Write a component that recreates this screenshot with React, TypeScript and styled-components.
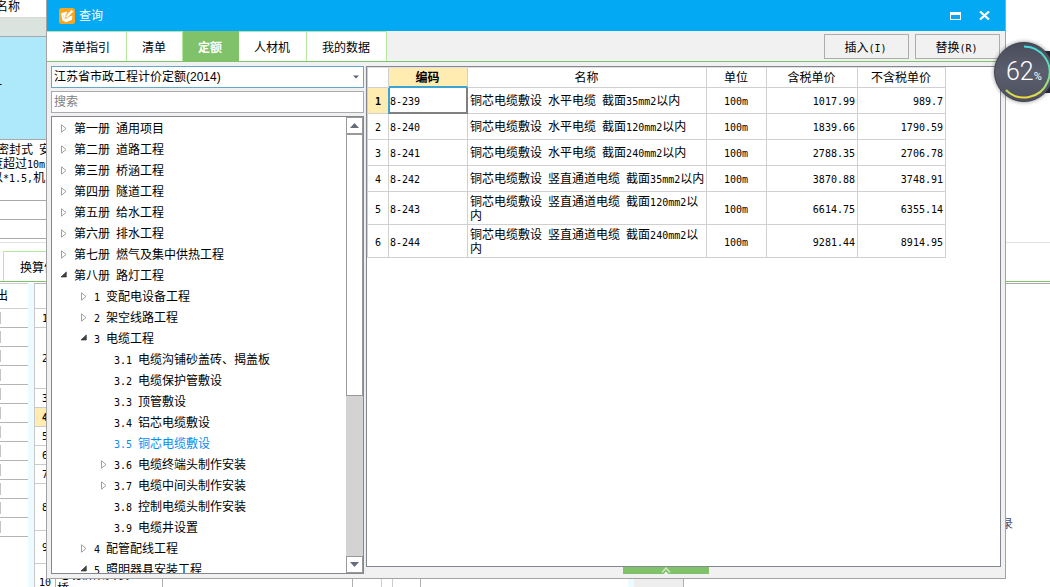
import React from 'react';
import styled, { createGlobalStyle } from 'styled-components';

const GlobalStyle = createGlobalStyle`
  *, *::before, *::after { box-sizing: border-box; }
  body {
    margin: 0;
    overflow: hidden;
    background: #fff;
    color: #000;
    font: 12px/14px "Liberation Sans", "Noto Sans CJK SC", sans-serif;
  }
  button, input, select { font: inherit; color: inherit; margin: 0; border-radius: 0; }
`;

/* ---------- text ---------- */

const Latin = styled.span`
  font-family: "DejaVu Sans Mono", "Liberation Mono", monospace;
  font-size: 10px;
  line-height: 10px;
  white-space: pre-wrap;
`;

/* Latin runs take half the width of a Chinese character. */
function Mixed({ children }: { children: string }) {
  return (
    <>
      {children.split(/([\x20-\x7e]+)/).map((part, i) =>
        i % 2 ? <Latin key={i}>{part}</Latin> : part
      )}
    </>
  );
}

/* ---------- main window behind the dialog ---------- */

const Screen = styled.div`
  position: relative;
  height: 100vh;
  overflow: hidden;
`;

const Backdrop = styled.div`
  display: flex;
  flex-direction: column;
  height: 100%;
`;

const ItemColumn = styled.div`
  width: 60px;
  flex: none;
`;

const ItemCell = styled.div<{ $h: number; $bg?: string; $line?: string; $indent?: number; $below?: number }>`
  display: flex;
  flex-direction: column;
  justify-content: center;
  height: ${p => p.$h}px;
  background: ${p => p.$bg ?? '#fff'};
  border-bottom: 1px solid ${p => p.$line ?? '#a8a8a8'};
  margin-left: ${p => -(p.$indent ?? 0)}px;
  padding-bottom: ${p => p.$below ?? 4}px;
  white-space: pre;
`;

const DetailBar = styled.div`
  display: flex;
  align-items: flex-end;
  height: 40px;
  margin-top: 3px;
  padding-left: 3px;
  border-top: 1px solid #e0e0e0;
  border-bottom: 1px solid #80c269;
`;

const DetailTab = styled.button`
  height: 30px;
  padding: 3px 16px 0;
  background: #fff;
  border: 1px solid #b4e89a;
  border-bottom: 0;
`;

const DetailArea = styled.div`
  display: flex;
  flex: 1;
  min-height: 0;
  margin-top: 1px;
`;

const SideGrid = styled.table`
  width: 28px;
  flex: none;
  align-self: flex-start;
  table-layout: fixed;
  border-collapse: separate;
  border-spacing: 0;
  border-top: 1px solid #d0d0d0;
  th, td { padding: 0; height: 19px; border-bottom: 1px solid #b4b4b4; text-align: left; }
  th { height: 25px; font-weight: 400; text-indent: -4px; border-color: #d0d0d0; }
`;

const TickEdge = styled.div`
  width: 1px;
  height: 12px;
  background: #c4c4c4;
`;

const Splitter = styled.div`
  width: 6px;
  flex: none;
  background: #ebfbff;
`;

const WorkGrid = styled.table`
  width: 387px;
  flex: none;
  align-self: flex-start;
  table-layout: fixed;
  border-collapse: separate;
  border-spacing: 0;
  border-top: 1px solid #b4b4b4;
  border-left: 1px solid #c8c8c8;
  th, td { padding: 0; border-bottom: 1px solid #ccc; border-right: 1px solid #b0b0b0; text-align: center; }
  th { font-weight: 400; }
`;

const WorkName = styled.td`
  && { text-align: left; padding-left: 1px; line-height: 14px; }
`;

const WorkRow = styled.tr<{ $h: number; $current?: boolean }>`
  height: ${p => p.$h}px;
  th { background: ${p => (p.$current ? '#ffecb0' : '#fff')}; font-weight: ${p => (p.$current ? 700 : 400)}; }
`;

const BackTick = styled.input`
  appearance: none;
  display: block;
  width: 12px;
  height: 12px;
  margin: 0 auto;
  border: 1px solid #ccc;
`;

const WorkSpace = styled.div`
  width: 207px;
  flex: none;
`;

const PaneEdge = styled.div`
  width: 50px;
  flex: none;
  background: #eee;
  border-right: 1px solid #b0b0b0;
`;

const SidePane = styled.div`
  flex: 1;
  display: flex;
  justify-content: flex-end;
  padding: 233px 37px 0 0;
  border-top: 1px solid #a8a8a8;
  color: #4a5070;
`;

/* ---------- dialog ---------- */

const Dialog = styled.section`
  position: absolute;
  inset: 0 44px 8px 46px;
  display: flex;
  flex-direction: column;
  background: #f1f1f1;
  border: solid #a3a3a6;
  border-width: 0 1px 1px;
`;

const TitleBar = styled.header`
  display: flex;
  align-items: center;
  height: 31px;
  flex: none;
  padding: 0 11px 0 12px;
  background: #03a9f3;
  color: #fff;
  h1 { flex: 1; margin: 0 0 0 4px; font-size: 12px; font-weight: 400; }
  svg { display: block; }
`;

const WindowButton = styled.button`
  width: 20px;
  height: 20px;
  margin-left: 9px;
  padding: 0;
  background: none;
  border: 0;
  display: flex;
  align-items: center;
  justify-content: center;
`;

const TabBar = styled.nav`
  display: flex;
  height: 31px;
  flex: none;
  border-bottom: 1px solid #80c269;
`;

const Tab = styled.button<{ $active?: boolean }>`
  padding: 3px 16px 0 15px;
  background: ${p => (p.$active ? '#80c269' : '#fff')};
  color: ${p => (p.$active ? '#fff' : '#000')};
  font-weight: ${p => (p.$active ? 700 : 400)};
  border: solid ${p => (p.$active ? '#80c269' : '#b4e89a')};
  border-width: 1px 1px 0 0;
`;

const Actions = styled.div`
  display: flex;
  gap: 6px;
  margin-left: auto;
  padding: 3px 5px 2px 0;
`;

const ActionButton = styled.button`
  width: 85px;
  padding: 2px 2px 0 0;
  background: #f1f1f1;
  border: 1px solid #adadad;
`;

const Body = styled.div`
  display: flex;
  flex: 1;
  min-height: 0;
  padding: 4px;
`;

const LeftPane = styled.div`
  display: flex;
  flex-direction: column;
  gap: 3px;
  width: 313px;
  flex: none;
`;

const SelectBox = styled.div`
  position: relative;
  height: 22px;
  flex: none;
  svg { position: absolute; right: 5px; top: 9px; pointer-events: none; }
`;

const QuotaSelect = styled.select`
  appearance: none;
  width: 100%;
  height: 22px;
  padding: 0 2px;
  background: #fff;
  border: 1px solid #62a9c9;
`;

const SearchInput = styled.input`
  height: 22px;
  width: 100%;
  flex: none;
  padding: 0 2px;
  background: #fff;
  border: 1px solid #ababaf;
  &::placeholder { color: #808080; opacity: 1; }
`;

const TreeBox = styled.div`
  display: flex;
  flex: 1;
  min-height: 0;
  background: #fff;
  border: 1px solid #828790;
`;

const Tree = styled.ul`
  flex: 1;
  margin: 0;
  padding: 1px 0 0;
  list-style: none;
  overflow: hidden;
`;

const TreeRow = styled.li<{ $level: number; $selected?: boolean }>`
  display: flex;
  align-items: center;
  height: 21px;
  padding-left: ${p => 8 + p.$level * 20}px;
  color: ${p => (p.$selected ? '#0a8cf0' : '#000')};
  white-space: nowrap;
`;

const ArrowSlot = styled.span`
  width: 14px;
  flex: none;
  svg { display: block; }
`;

const ScrollBar = styled.div`
  display: flex;
  flex-direction: column;
  width: 17px;
  flex: none;
  background: #d3d3d3;
`;

const ScrollButton = styled.button`
  height: 17px;
  flex: none;
  padding: 0;
  background: #fff;
  border: 1px solid #999;
  display: flex;
  align-items: center;
  justify-content: center;
`;

const ScrollTrack = styled.div`
  flex: 1;
`;

const ScrollThumb = styled.div`
  height: 62%;
  background: #fff;
  border: 1px solid #999;
`;

const PaneSplitter = styled.div`
  width: 2px;
  flex: none;
  border-right: 1px solid #dcf1f6;
`;

const RightPane = styled.div`
  display: flex;
  flex-direction: column;
  flex: 1;
  min-width: 0;
`;

const GridBox = styled.div`
  flex: 1;
  min-height: 0;
  background: #fff;
  border: 1px solid #828790;
`;

const GripRow = styled.div`
  display: flex;
  justify-content: center;
  height: 7px;
  flex: none;
  padding-right: 36px;
`;

const Grip = styled.button`
  display: flex;
  justify-content: center;
  width: 86px;
  height: 7px;
  padding: 0;
  background: #80c269;
  border: 0;
`;

const QuotaTable = styled.table`
  width: 579px;
  table-layout: fixed;
  border-collapse: separate;
  border-spacing: 0;
  border-left: 1px solid #d0d0d0;
  th, td {
    padding: 1px 2px 0 1px;
    border-right: 1px solid #d0d0d0;
    border-bottom: 1px solid #d0d0d0;
  }
  th { font-weight: 400; text-align: center; }
`;

const HeadRow = styled.tr`
  height: 21px;
  th { border-top: 1px solid #e0e0e0; }
  th:nth-child(2) {
    background: #ffecb0;
    border-bottom: 2px solid #3aa5d5;
    font-weight: 700;
  }
`;

const QuotaRow = styled.tr<{ $tall?: boolean; $current?: boolean }>`
  height: ${p => (p.$tall ? 33 : 26)}px;
  th {
    padding: 1px 2px 0;
    background: ${p => (p.$current ? '#ffecb0' : '#fff')};
    font-weight: ${p => (p.$current ? 700 : 400)};
  }
`;

const CodeCell = styled.td<{ $current?: boolean }>`
  position: relative;
  &::after {
    content: "";
    display: ${p => (p.$current ? 'block' : 'none')};
    position: absolute;
    inset: 0 -1px -1px -1px;
    border: solid #808080;
    border-width: 0 2px 2px 2px;
    border-left-color: #3aa5d5;
  }
`;

const NameCell = styled.td`
  && { padding-right: 0; padding-left: 2px; }
`;

const UnitCell = styled.td`
  text-align: center;
`;

const PriceCell = styled.td`
  text-align: right;
`;

/* ---------- floating load meter ---------- */

const Meter = styled.aside`
  position: absolute;
  right: -6px;
  top: 39px;
  width: 64px;
  height: 66px;
  svg { display: block; overflow: visible; }
`;

const MeterText = styled.div`
  position: absolute;
  inset: 0 0 0 14px;
  display: flex;
  align-items: center;
  color: #fff;
  font-family: Roboto, "Open Sans", sans-serif;
  font-size: 25px;
  font-weight: 300;
  line-height: 32px;
  small { font-size: 11px; font-weight: 400; line-height: 12px; padding-top: 10px; }
`;

/* ---------- data ---------- */

type Node = { level: number; text: string; arrow?: 'open' | 'closed'; selected?: boolean };

const nodes: Node[] = [
  { level: 0, text: '第一册 通用项目', arrow: 'closed' },
  { level: 0, text: '第二册 道路工程', arrow: 'closed' },
  { level: 0, text: '第三册 桥涵工程', arrow: 'closed' },
  { level: 0, text: '第四册 隧道工程', arrow: 'closed' },
  { level: 0, text: '第五册 给水工程', arrow: 'closed' },
  { level: 0, text: '第六册 排水工程', arrow: 'closed' },
  { level: 0, text: '第七册 燃气及集中供热工程', arrow: 'closed' },
  { level: 0, text: '第八册 路灯工程', arrow: 'open' },
  { level: 1, text: '1 变配电设备工程', arrow: 'closed' },
  { level: 1, text: '2 架空线路工程', arrow: 'closed' },
  { level: 1, text: '3 电缆工程', arrow: 'open' },
  { level: 2, text: '3.1 电缆沟铺砂盖砖、揭盖板' },
  { level: 2, text: '3.2 电缆保护管敷设' },
  { level: 2, text: '3.3 顶管敷设' },
  { level: 2, text: '3.4 铝芯电缆敷设' },
  { level: 2, text: '3.5 铜芯电缆敷设', selected: true },
  { level: 2, text: '3.6 电缆终端头制作安装', arrow: 'closed' },
  { level: 2, text: '3.7 电缆中间头制作安装', arrow: 'closed' },
  { level: 2, text: '3.8 控制电缆头制作安装' },
  { level: 2, text: '3.9 电缆井设置' },
  { level: 1, text: '4 配管配线工程', arrow: 'closed' },
  { level: 1, text: '5 照明器具安装工程', arrow: 'open' },
];

const quotas = [
  { code: '8-239', name: '铜芯电缆敷设 水平电缆 截面35mm2以内', price: '1017.99', net: '989.7' },
  { code: '8-240', name: '铜芯电缆敷设 水平电缆 截面120mm2以内', price: '1839.66', net: '1790.59' },
  { code: '8-241', name: '铜芯电缆敷设 水平电缆 截面240mm2以内', price: '2788.35', net: '2706.78' },
  { code: '8-242', name: '铜芯电缆敷设 竖直通道电缆 截面35mm2以内', price: '3870.88', net: '3748.91' },
  { code: '8-243', name: '铜芯电缆敷设 竖直通道电缆 截面120mm2以内', price: '6614.75', net: '6355.14', tall: true },
  { code: '8-244', name: '铜芯电缆敷设 竖直通道电缆 截面240mm2以内', price: '9281.44', net: '8914.95', tall: true },
];

const workRowHeights = [19, 61, 19, 19, 19, 19, 19, 47, 33, 36];
const tabs = ['清单指引', '清单', '定额', '人材机', '我的数据'];

/* ---------- drawings ---------- */

const Arrow = ({ kind }: { kind: 'open' | 'closed' }) =>
  kind === 'closed' ? (
    <svg width="8" height="9" viewBox="0 0 8 9" aria-hidden="true">
      <path d="M1.5 .8v7.4L6 4.5z" fill="#fff" stroke="#a0a0a0" />
    </svg>
  ) : (
    <svg width="8" height="9" viewBox="0 0 8 9" aria-hidden="true">
      <path d="M6.300 .9v5.100H1z" fill="#444" stroke="#222" strokeWidth=".6" />
    </svg>
  );

const AppIcon = () => (
  <svg width="16" height="16" viewBox="0 0 16 16" aria-hidden="true">
    <rect width="16" height="16" rx="2.5" fill="#f9a51f" />
    <path d="M2 5.200 8.500 3.400 6.500 7.500l1.500 1.700 5.400-1.700-.5 4.600-6 2.200-3.400-1.800z" fill="#fff" />
    <path d="m6.400 10.200.9-3.200L12.400 1.600l2.200 2-5.200 5.400z" fill="#fff" stroke="#f9a51f" strokeWidth=".7" />
    <path d="m4.200 6.800 1.200 4 3.600-.6" fill="none" stroke="#fbd08a" strokeWidth=".8" />
  </svg>
);

function Background() {
  return (
    <Backdrop>
      <ItemColumn>
        <ItemCell $h={18} $line="#d8d8d8" $indent={4}>名称</ItemCell>
        <ItemCell $h={19} $bg="#dbe3df" />
        <ItemCell $h={103} $bg="#aee9fb" $indent={10}>一</ItemCell>
        <ItemCell $h={61} $indent={9} $below={12}>
          <div><Mixed>{' 密封式 安'}</Mixed></div>
          <div><Mixed>度超过10m</Mixed></div>
          <div><Mixed>以*1.5,机</Mixed></div>
        </ItemCell>
        <ItemCell $h={19} />
        <ItemCell $h={19} />
      </ItemColumn>
      <DetailBar>
        <DetailTab type="button">换算信息</DetailTab>
      </DetailBar>
      <DetailArea>
        <SideGrid>
          <thead><tr><th>出</th></tr></thead>
          <tbody>
            {Array.from({ length: 12 }, (_, i) => (
              <tr key={i}><td><TickEdge /></td></tr>
            ))}
          </tbody>
        </SideGrid>
        <Splitter />
        <WorkGrid>
          <colgroup>
            <col style={{ width: 21 }} />
            <col style={{ width: 107 }} />
            <col style={{ width: 190 }} />
            <col style={{ width: 68 }} />
          </colgroup>
          <tbody>
            <WorkRow $h={25}><th /><td /><td /><td /></WorkRow>
            {workRowHeights.map((h, i) => (
              <WorkRow key={i} $h={h} $current={i === 3}>
                <th scope="row"><Latin>{i + 1}</Latin></th>
                <WorkName>{i === 9 && <>电缆桥架安装<br />桥</>}</WorkName>
                <td />
                <td>{i === 9 && <BackTick type="checkbox" aria-label="输出" />}</td>
              </WorkRow>
            ))}
          </tbody>
        </WorkGrid>
        <WorkSpace />
        <Splitter />
        <PaneEdge />
        <SidePane>录</SidePane>
      </DetailArea>
    </Backdrop>
  );
}

function QueryDialog() {
  return (
    <Dialog role="dialog" aria-label="查询">
      <TitleBar>
        <AppIcon />
        <h1>查询</h1>
        <WindowButton type="button" aria-label="最大化">
          <svg width="11" height="8" viewBox="0 0 11 8">
            <path d="M0 0h11v8H0zM1 3v4h9V3z" fill="#fff" fillRule="evenodd" />
          </svg>
        </WindowButton>
        <WindowButton type="button" aria-label="关闭">
          <svg width="11" height="9" viewBox="0 0 11 9">
            <path d="M1 .5 10 8.5M10 .5 1 8.5" stroke="#fff" strokeWidth="2.2" />
          </svg>
        </WindowButton>
      </TitleBar>
      <TabBar>
        {tabs.map(t => <Tab key={t} type="button" $active={t === '定额'}>{t}</Tab>)}
        <Actions>
          <ActionButton type="button"><Mixed>插入(I)</Mixed></ActionButton>
          <ActionButton type="button"><Mixed>替换(R)</Mixed></ActionButton>
        </Actions>
      </TabBar>
      <Body>
        <LeftPane>
          <SelectBox>
            <QuotaSelect aria-label="定额库">
              <option>江苏省市政工程计价定额(2014)</option>
            </QuotaSelect>
            <svg width="6" height="4" viewBox="0 0 6 4" aria-hidden="true">
              <path d="M0 .5h6L3 3.5z" fill="#5a6070" />
            </svg>
          </SelectBox>
          <SearchInput type="text" placeholder="搜索" aria-label="搜索" />
          <TreeBox>
            <Tree>
              {nodes.map(n => (
                <TreeRow key={n.text} $level={n.level} $selected={n.selected}>
                  <ArrowSlot>{n.arrow && <Arrow kind={n.arrow} />}</ArrowSlot>
                  <span><Mixed>{n.text}</Mixed></span>
                </TreeRow>
              ))}
            </Tree>
            <ScrollBar>
              <ScrollButton type="button" aria-label="向上滚动">
                <svg width="9" height="5" viewBox="0 0 9 5"><path d="M0 5h9L4.500 0z" fill="#666c7c" /></svg>
              </ScrollButton>
              <ScrollTrack><ScrollThumb /></ScrollTrack>
              <ScrollButton type="button" aria-label="向下滚动">
                <svg width="9" height="5" viewBox="0 0 9 5"><path d="M0 0h9L4.500 5z" fill="#666c7c" /></svg>
              </ScrollButton>
            </ScrollBar>
          </TreeBox>
        </LeftPane>
        <PaneSplitter />
        <RightPane>
          <GridBox>
            <QuotaTable>
              <colgroup>
                <col style={{ width: 21 }} />
                <col style={{ width: 79 }} />
                <col style={{ width: 239 }} />
                <col style={{ width: 60 }} />
                <col style={{ width: 91 }} />
                <col style={{ width: 88 }} />
              </colgroup>
              <thead>
                <HeadRow>
                  <th />
                  <th scope="col">编码</th>
                  <th scope="col">名称</th>
                  <th scope="col">单位</th>
                  <th scope="col">含税单价</th>
                  <th scope="col">不含税单价</th>
                </HeadRow>
              </thead>
              <tbody>
                {quotas.map((q, i) => (
                  <QuotaRow key={q.code} $tall={q.tall} $current={i === 0}>
                    <th scope="row"><Latin>{i + 1}</Latin></th>
                    <CodeCell $current={i === 0}><Latin>{q.code}</Latin></CodeCell>
                    <NameCell><Mixed>{q.name}</Mixed></NameCell>
                    <UnitCell><Latin>100m</Latin></UnitCell>
                    <PriceCell><Latin>{q.price}</Latin></PriceCell>
                    <PriceCell><Latin>{q.net}</Latin></PriceCell>
                  </QuotaRow>
                ))}
              </tbody>
            </QuotaTable>
          </GridBox>
          <GripRow>
            <Grip type="button" aria-label="展开">
              <svg width="10" height="7" viewBox="0 0 10 7">
                <path d="M1 5.500 5 1l4 4.500" fill="none" stroke="#cdeabf" strokeWidth="1.5" />
                <path d="M3 7l2-2.500L7 7z" fill="#fff" />
              </svg>
            </Grip>
          </GripRow>
        </RightPane>
      </Body>
    </Dialog>
  );
}

function LoadMeter() {
  return (
    <Meter aria-label="62%">
      <svg width="64" height="66" viewBox="0 0 64 66" aria-hidden="true">
        <defs>
          <linearGradient id="arc" x1="0" y1="0" x2="0" y2="1">
            <stop offset="0" stopColor="#45dbe0" />
            <stop offset=".5" stopColor="#6fe0a0" />
            <stop offset=".8" stopColor="#a8e070" />
            <stop offset="1" stopColor="#f0d83c" />
          </linearGradient>
          <linearGradient id="disc" x1="0" y1="0" x2="0" y2="1">
            <stop offset="0" stopColor="#494d5b" />
            <stop offset=".5" stopColor="#5a5e6e" />
            <stop offset="1" stopColor="#4c505f" />
          </linearGradient>
          <filter id="shade" x="-20%" y="-20%" width="140%" height="140%">
            <feGaussianBlur stdDeviation="2" />
          </filter>
        </defs>
        <rect x="36" y="12" width="28" height="42" fill="#2a2c39" />
        <circle cx="32" cy="33" r="30" fill="#000" opacity=".45" filter="url(#shade)" />
        <circle cx="32" cy="33" r="29.500" fill="url(#disc)" stroke="#40434f" />
        <path d="M32 7.500a25.500 25.500 0 1 1-18 43.500" fill="none" stroke="url(#arc)" strokeWidth="2" />
      </svg>
      <MeterText>62<small>%</small></MeterText>
    </Meter>
  );
}

export default function App() {
  return (
    <Screen>
      <GlobalStyle />
      <Background />
      <QueryDialog />
      <LoadMeter />
    </Screen>
  );
}
